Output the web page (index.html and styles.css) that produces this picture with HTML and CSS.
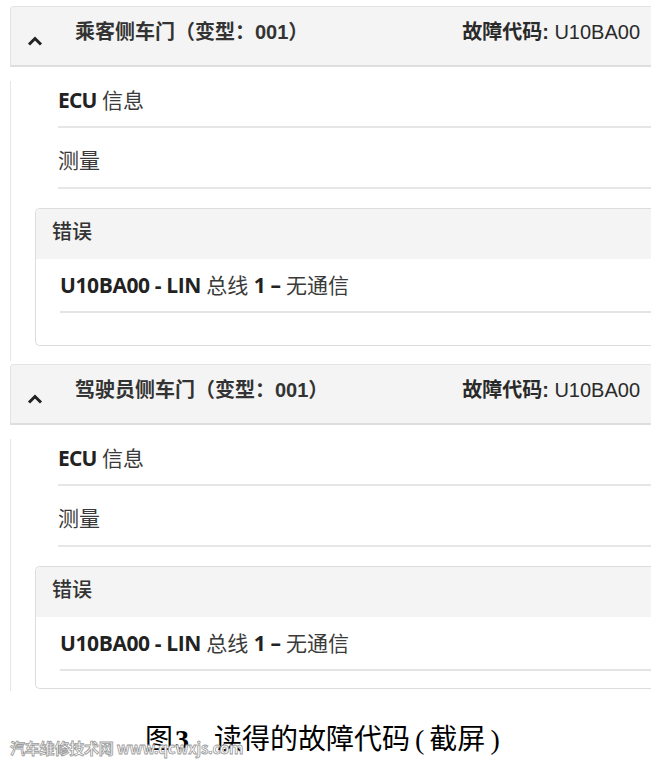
FILE: index.html
```html
<!DOCTYPE html>
<html lang="zh-CN">
<head>
<meta charset="utf-8">
<title>读得的故障代码</title>
<link rel="stylesheet" href="styles.css">
</head>
<body>
<div class="page">
  <section class="panel">
    <header class="panel-head">
      <svg class="chev" width="16" height="10" viewBox="0 0 16 10"><polyline points="2,8.5 8,2.5 14,8.5" fill="none" stroke="#222" stroke-width="3" stroke-linecap="butt" stroke-linejoin="miter"/></svg>
      <span class="title">乘客侧车门（变型：001）</span>
      <span class="code"><b>故障代码:</b> U10BA00</span>
    </header>
    <div class="panel-body">
      <div class="row first"><b class="lat">ECU</b> 信息</div>
      <div class="row">测量</div>
      <div class="err">
        <div class="err-head">错误</div>
        <div class="err-body">
          <div class="err-line"><b>U10BA00 - LIN</b> 总线 <b>1 –</b> 无通信</div>
        </div>
      </div>
    </div>
  </section>
  <section class="panel last">
    <header class="panel-head">
      <svg class="chev" width="16" height="10" viewBox="0 0 16 10"><polyline points="2,8.5 8,2.5 14,8.5" fill="none" stroke="#222" stroke-width="3" stroke-linecap="butt" stroke-linejoin="miter"/></svg>
      <span class="title">驾驶员侧车门（变型：001）</span>
      <span class="code"><b>故障代码:</b> U10BA00</span>
    </header>
    <div class="panel-body">
      <div class="row first"><b class="lat">ECU</b> 信息</div>
      <div class="row">测量</div>
      <div class="err">
        <div class="err-head">错误</div>
        <div class="err-body">
          <div class="err-line"><b>U10BA00 - LIN</b> 总线 <b>1 –</b> 无通信</div>
        </div>
      </div>
    </div>
  </section>
  <p class="caption"><span class="fig">图<b>3</b></span>读得的故障代码<span class="par">(</span>截屏<span class="par">)</span></p>
  <div class="watermark">汽车维修技术网 www.qcwxjs.com</div>
</div>
</body>
</html>
```

FILE: styles.css
```css
html, body {
  margin: 0;
  padding: 0;
  background: #ffffff;
}

.page {
  position: relative;
  width: 662px;
  height: 762px;
  padding-top: 6px;
  box-sizing: border-box;
  font-family: "Open Sans", "Noto Sans CJK SC", sans-serif;
  color: #383838;
}

.panel {
  margin-left: 10px;
  width: 641px;
}

.panel + .panel {
  margin-top: 3px;
}

.panel-head {
  display: flex;
  align-items: flex-start;
  height: 58px;
  background: #f4f4f4;
  border-top: 1px solid #e4e4e4;
  border-left: 1px solid #e2e2e2;
  border-bottom: 2px solid #dedede;
  border-top-left-radius: 4px;
  padding-left: 16px;
  padding-right: 11px;
  font-family: "Liberation Sans", "Noto Sans CJK SC", sans-serif;
  font-size: 20px;
  color: #333333;
}

.chev {
  margin-top: 29px;
  flex: none;
}

.title {
  margin-left: 32px;
  margin-top: 12px;
  line-height: 26px;
  font-weight: 700;
}

.code {
  margin-left: auto;
  margin-top: 12px;
  line-height: 26px;
  font-weight: 400;
  color: #2a2a2a;
}

.code b {
  font-weight: 700;
}

.panel-body {
  margin-top: 14px;
  border-left: 1px solid #e6e6e6;
  padding-bottom: 15px;
}

.panel.last .panel-body {
  padding-bottom: 2px;
}

.row {
  margin-left: 47px;
  padding-top: 14px;
  height: 36px;
  line-height: 36px;
  padding-bottom: 9px;
  border-bottom: 2px solid #e6e6e6;
  font-size: 21px;
  color: #3a3a3a;
}

.row.first {
  padding-top: 1px;
  padding-bottom: 8px;
}

.row .lat {
  font-weight: 700;
  letter-spacing: -0.8px;
  color: #222;
}

.err {
  margin-top: 19px;
  margin-left: 24px;
  border: 1px solid #dcdcdc;
  border-right: none;
  border-radius: 5px 0 0 5px;
}

.err-head {
  height: 50px;
  line-height: 46px;
  background: #f4f4f4;
  padding-left: 16px;
  font-size: 20px;
  font-weight: 500;
  color: #333;
  border-top-left-radius: 5px;
}

.err-body {
  padding-left: 24px;
  padding-bottom: 32px;
}

.panel.last .err-body {
  padding-bottom: 17px;
}

.err-line {
  height: 52px;
  line-height: 52px;
  border-bottom: 2px solid #e4e4e4;
  font-size: 21px;
  color: #3a3a3a;
}

.err-line b {
  font-weight: 700;
  color: #222;
  letter-spacing: -0.4px;
}

.caption {
  margin: 31px 0 0 145px;
  font-family: "Liberation Serif", "Noto Sans CJK SC", serif;
  font-size: 28px;
  line-height: 36px;
  color: #000;
}

.caption .fig {
  margin-right: 25px;
}

.caption .fig b {
  font-weight: 700;
  margin-left: 2px;
}

.caption .par {
  margin: 0 5px;
}

.watermark {
  position: absolute;
  left: 10px;
  top: 738px;
  font-family: "Noto Sans CJK SC", sans-serif;
  font-size: 15px;
  line-height: 20px;
  font-weight: 700;
  color: #ffffff;
  -webkit-text-stroke: 0.8px #9a9a9a;
  letter-spacing: -0.2px;
}
```
